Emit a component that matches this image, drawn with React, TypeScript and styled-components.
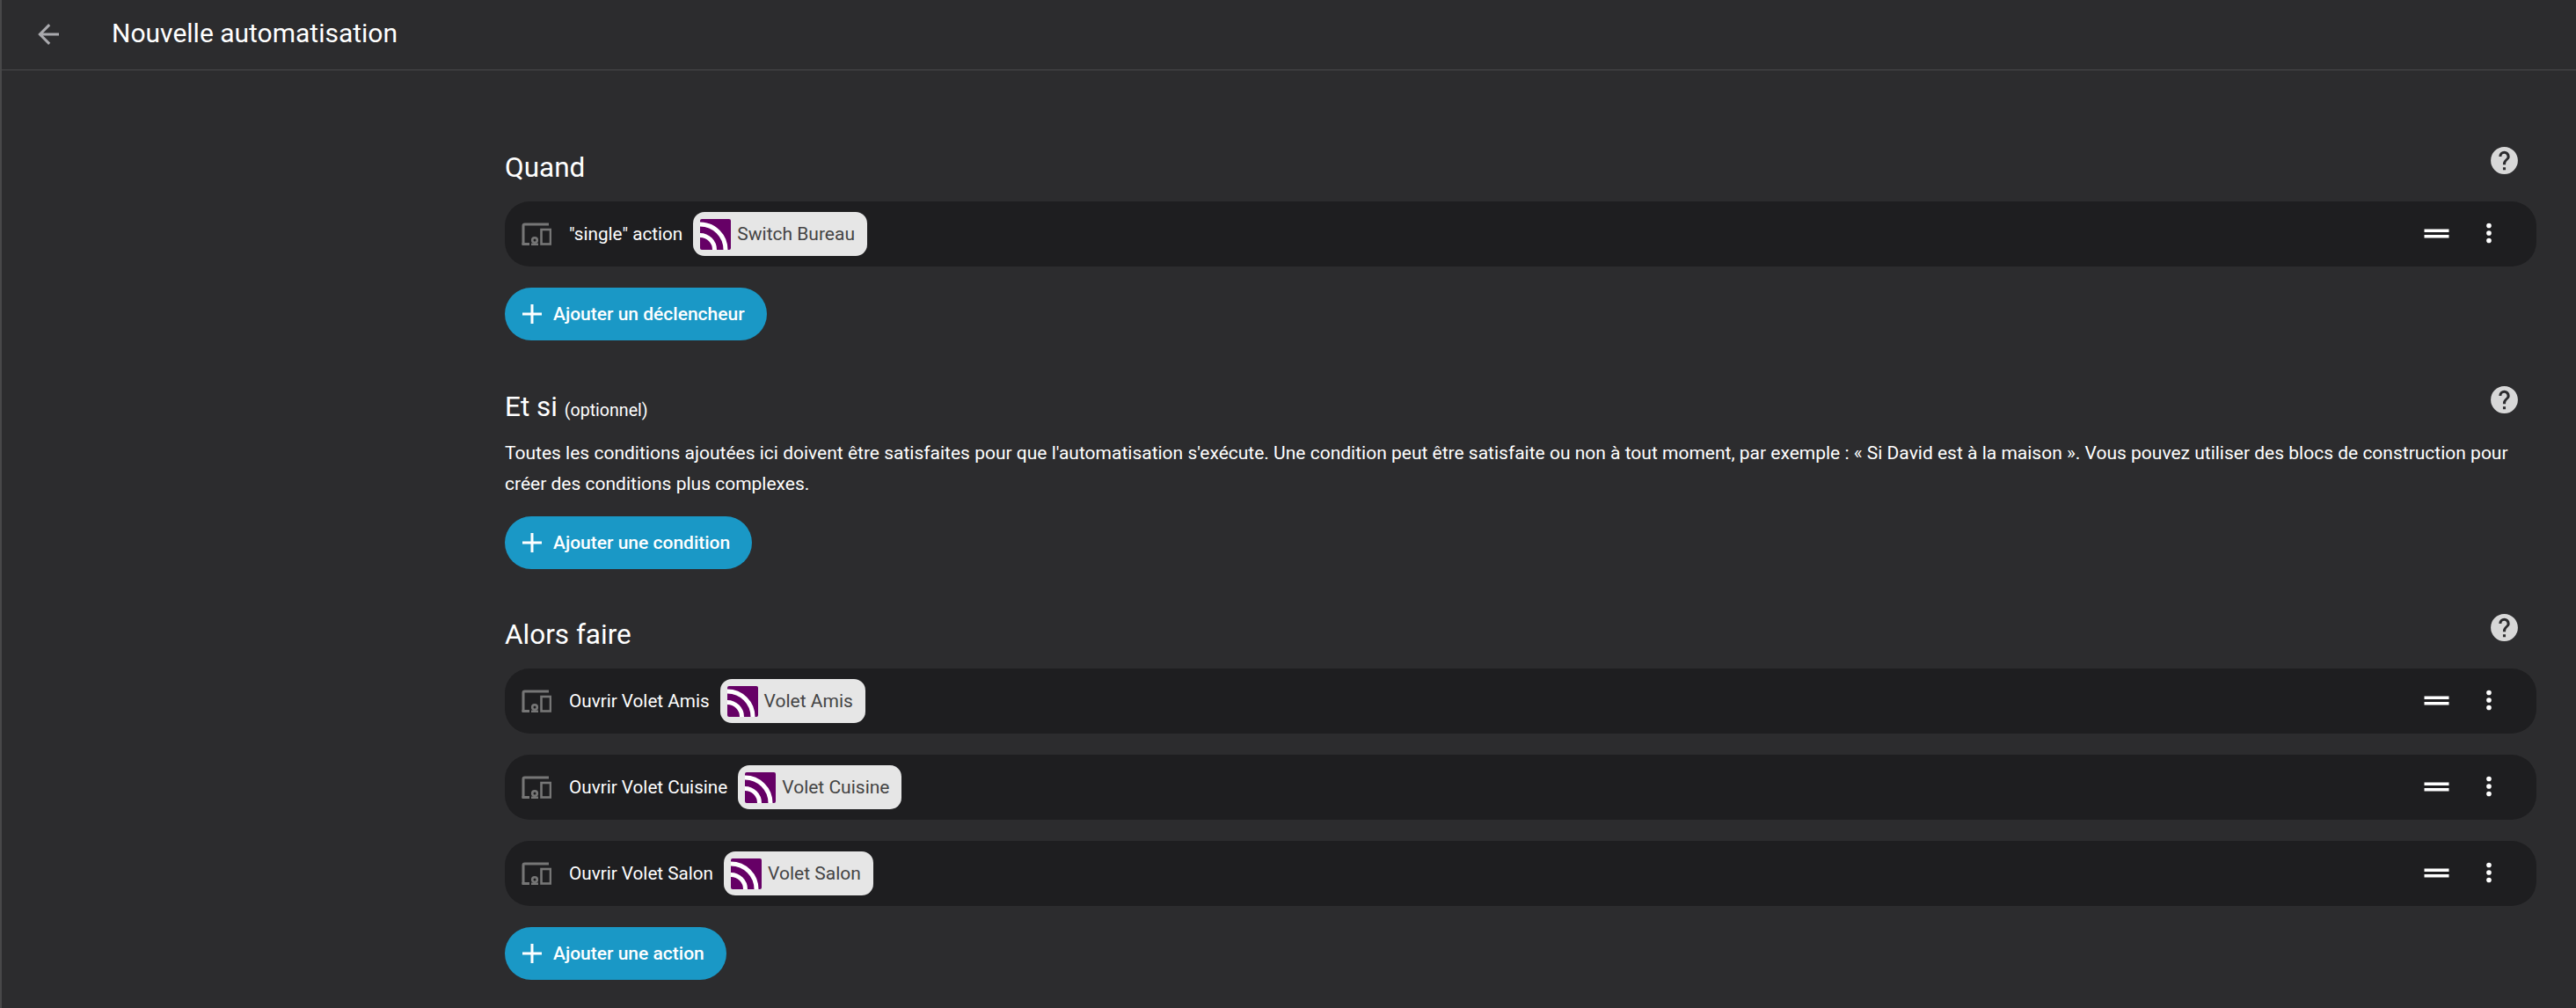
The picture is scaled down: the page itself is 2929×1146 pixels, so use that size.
import React from "react";
import styled, { createGlobalStyle } from "styled-components";

const Global = createGlobalStyle`
  html, body { margin: 0; padding: 0; background: #2c2c2e; }
  body { font-family: Roboto, "Liberation Sans", sans-serif; color: #fff; }
  * { box-sizing: border-box; }
`;

const Page = styled.div`
  width: 2929px;
  height: 1146px;
  overflow: hidden;
  background: #2c2c2e;
  border-left: 2px solid #484849;
`;

const TopBar = styled.header`
  height: 80px;
  display: flex;
  align-items: center;
  padding-left: 35px;
  border-bottom: 1px solid #49494b;
`;

const BackIcon = styled.svg`
  width: 36px;
  height: 36px;
  fill: #a9a9ad;
  flex: none;
  margin-top: -2px;
`;

const PageTitle = styled.h1`
  margin: -3px 0 0 54px;
  font-size: 30px;
  font-weight: 400;
  line-height: 36px;
`;

const Main = styled.main`
  padding: 86px 45px 0 572px;
  display: flex;
  flex-direction: column;
`;

const Section = styled.section<{ $gap: number }>`
  display: flex;
  flex-direction: column;
  align-items: flex-start;
  margin-bottom: ${(p) => p.$gap}px;
`;

const SectionHeader = styled.div`
  width: 100%;
  height: 48px;
  display: flex;
  justify-content: space-between;
  align-items: flex-start;
`;

const SectionTitle = styled.h2`
  margin: 0;
  font-size: 31.5px;
  font-weight: 400;
  line-height: 50px;
`;

const Optional = styled.small`
  font-size: 19.6px;
`;

const HelpIcon = styled.svg`
  width: 37px;
  height: 37px;
  margin: -2px 18px 0 0;
  fill: #d8d8d8;
  flex: none;
`;

const Description = styled.p`
  margin: 12px 0 19px;
  font-size: 21px;
  line-height: 35px;
`;

const Rows = styled.div`
  width: 100%;
  margin-top: 15px;
  display: flex;
  flex-direction: column;
  gap: 24px;
`;

const Row = styled.div`
  height: 74px;
  display: flex;
  align-items: center;
  padding: 0 37px 0 19px;
  border-radius: 28px;
  background: #1e1e20;
`;

const DeviceIcon = styled.svg`
  width: 34px;
  height: 26px;
  flex: none;
  margin-right: 20px;
  fill: none;
  stroke: #767676;
`;

const RowLabel = styled.span`
  font-size: 20.7px;
  line-height: 28px;
  white-space: nowrap;
`;

const Chip = styled.span`
  height: 50px;
  margin-left: 12px;
  display: inline-flex;
  align-items: center;
  gap: 7px;
  padding: 0 14px 0 8px;
  border-radius: 13px;
  background: #e6e6e6;
  color: #444;
  font-size: 21px;
  white-space: nowrap;
`;

const ChipLogo = styled.svg`
  width: 35px;
  height: 35px;
  flex: none;
  border-radius: 2px;
`;

const RowControls = styled.div`
  margin-left: auto;
  margin-bottom: 2px;
  display: flex;
  align-items: center;
  gap: 24px;
`;

const HandleIcon = styled.svg`
  width: 37px;
  height: 37px;
  fill: #fff;
  flex: none;
`;

const MenuIcon = styled.svg`
  width: 34px;
  height: 34px;
  fill: #fff;
  flex: none;
`;

const AddButton = styled.button`
  height: 60px;
  margin-top: 24px;
  display: inline-flex;
  align-items: center;
  gap: 13px;
  padding: 0 25px 0 20px;
  border: 0;
  border-radius: 30px;
  background: #1a98c6;
  color: #fff;
  font-family: inherit;
  font-size: 21px;
  font-weight: 500;
`;

const PlusIcon = styled.svg`
  width: 22px;
  height: 22px;
  flex: none;
  stroke: #fff;
  stroke-width: 3;
`;

const ConditionButton = styled(AddButton)`
  margin-top: 0;
`;

const Help = () => (
  <HelpIcon viewBox="0 0 24 24">
    <path d="M15.07,11.25L14.17,12.17C13.45,12.89 13,13.5 13,15H11V14.5C11,13.39 11.45,12.39 12.17,11.67L13.41,10.41C13.78,10.05 14,9.55 14,9C14,7.89 13.1,7 12,7A2,2 0 0,0 10,9H8A4,4 0 0,1 12,5A4,4 0 0,1 16,9C16,9.88 15.64,10.67 15.07,11.25M13,19H11V17H13M12,2A10,10 0 0,0 2,12A10,10 0 0,0 12,22A10,10 0 0,0 22,12C22,6.47 17.5,2 12,2Z" />
  </HelpIcon>
);

const Plus = () => (
  <PlusIcon viewBox="0 0 22 22">
    <path d="M11 0V22M0 11H22" />
  </PlusIcon>
);

const Logo = () => (
  <ChipLogo viewBox="0 0 35 35">
    <rect width="35" height="35" fill="#660066" />
    <circle cx="0" cy="35" r="16.5" fill="none" stroke="#fff" strokeWidth="5" />
    <circle cx="0" cy="35" r="29" fill="none" stroke="#fff" strokeWidth="5" />
  </ChipLogo>
);

const AutomationRow = ({ label, device }: { label: string; device: string }) => (
  <Row>
    <DeviceIcon viewBox="0 0 34 26">
      <path strokeWidth="3" d="M2 25V3.5Q2 2 3.5 2H31" />
      <path strokeWidth="3" d="M0.5 24.5H9" />
      <rect x="22.5" y="8" width="10.5" height="16.5" strokeWidth="2.6" />
      <circle cx="15" cy="20" r="2.8" strokeWidth="2.6" />
      <path strokeWidth="2.6" d="M11 24.8H19" />
    </DeviceIcon>
    <RowLabel>{label}</RowLabel>
    <Chip>
      <Logo />
      {device}
    </Chip>
    <RowControls>
      <HandleIcon viewBox="0 0 37 37">
        <path d="M4.5 13.5H32.5V17H4.5ZM4.5 20H32.5V23.5H4.5Z" />
      </HandleIcon>
      <MenuIcon viewBox="0 0 24 24">
        <path d="M12,16A2,2 0 0,1 14,18A2,2 0 0,1 12,20A2,2 0 0,1 10,18A2,2 0 0,1 12,16M12,10A2,2 0 0,1 14,12A2,2 0 0,1 12,14A2,2 0 0,1 10,12A2,2 0 0,1 12,10M12,4A2,2 0 0,1 14,6A2,2 0 0,1 12,8A2,2 0 0,1 10,6A2,2 0 0,1 12,4Z" />
      </MenuIcon>
    </RowControls>
  </Row>
);

export default function App() {
  return (
    <Page>
      <Global />
      <TopBar>
        <BackIcon viewBox="0 0 24 24">
          <path d="M20,11V13H8L13.5,18.5L12.08,19.92L4.16,12L12.08,4.08L13.5,5.5L8,11H20Z" />
        </BackIcon>
        <PageTitle>Nouvelle automatisation</PageTitle>
      </TopBar>
      <Main>
        <Section $gap={51}>
          <SectionHeader>
            <SectionTitle>Quand</SectionTitle>
            <Help />
          </SectionHeader>
          <Rows>
            <AutomationRow label={'"single" action'} device="Switch Bureau" />
          </Rows>
          <AddButton>
            <Plus />
            Ajouter un déclencheur
          </AddButton>
        </Section>
        <Section $gap={50}>
          <SectionHeader>
            <SectionTitle>
              Et si <Optional>(optionnel)</Optional>
            </SectionTitle>
            <Help />
          </SectionHeader>
          <Description>
            Toutes les conditions ajoutées ici doivent être satisfaites pour que l'automatisation s'exécute. Une condition peut être satisfaite ou non à tout moment, par exemple : « Si David est à la maison ». Vous pouvez utiliser des blocs de construction pour créer des conditions plus complexes.
          </Description>
          <ConditionButton>
            <Plus />
            Ajouter une condition
          </ConditionButton>
        </Section>
        <Section $gap={0}>
          <SectionHeader>
            <SectionTitle>Alors faire</SectionTitle>
            <Help />
          </SectionHeader>
          <Rows>
            <AutomationRow label="Ouvrir Volet Amis" device="Volet Amis" />
            <AutomationRow label="Ouvrir Volet Cuisine" device="Volet Cuisine" />
            <AutomationRow label="Ouvrir Volet Salon" device="Volet Salon" />
          </Rows>
          <AddButton>
            <Plus />
            Ajouter une action
          </AddButton>
        </Section>
      </Main>
    </Page>
  );
}
